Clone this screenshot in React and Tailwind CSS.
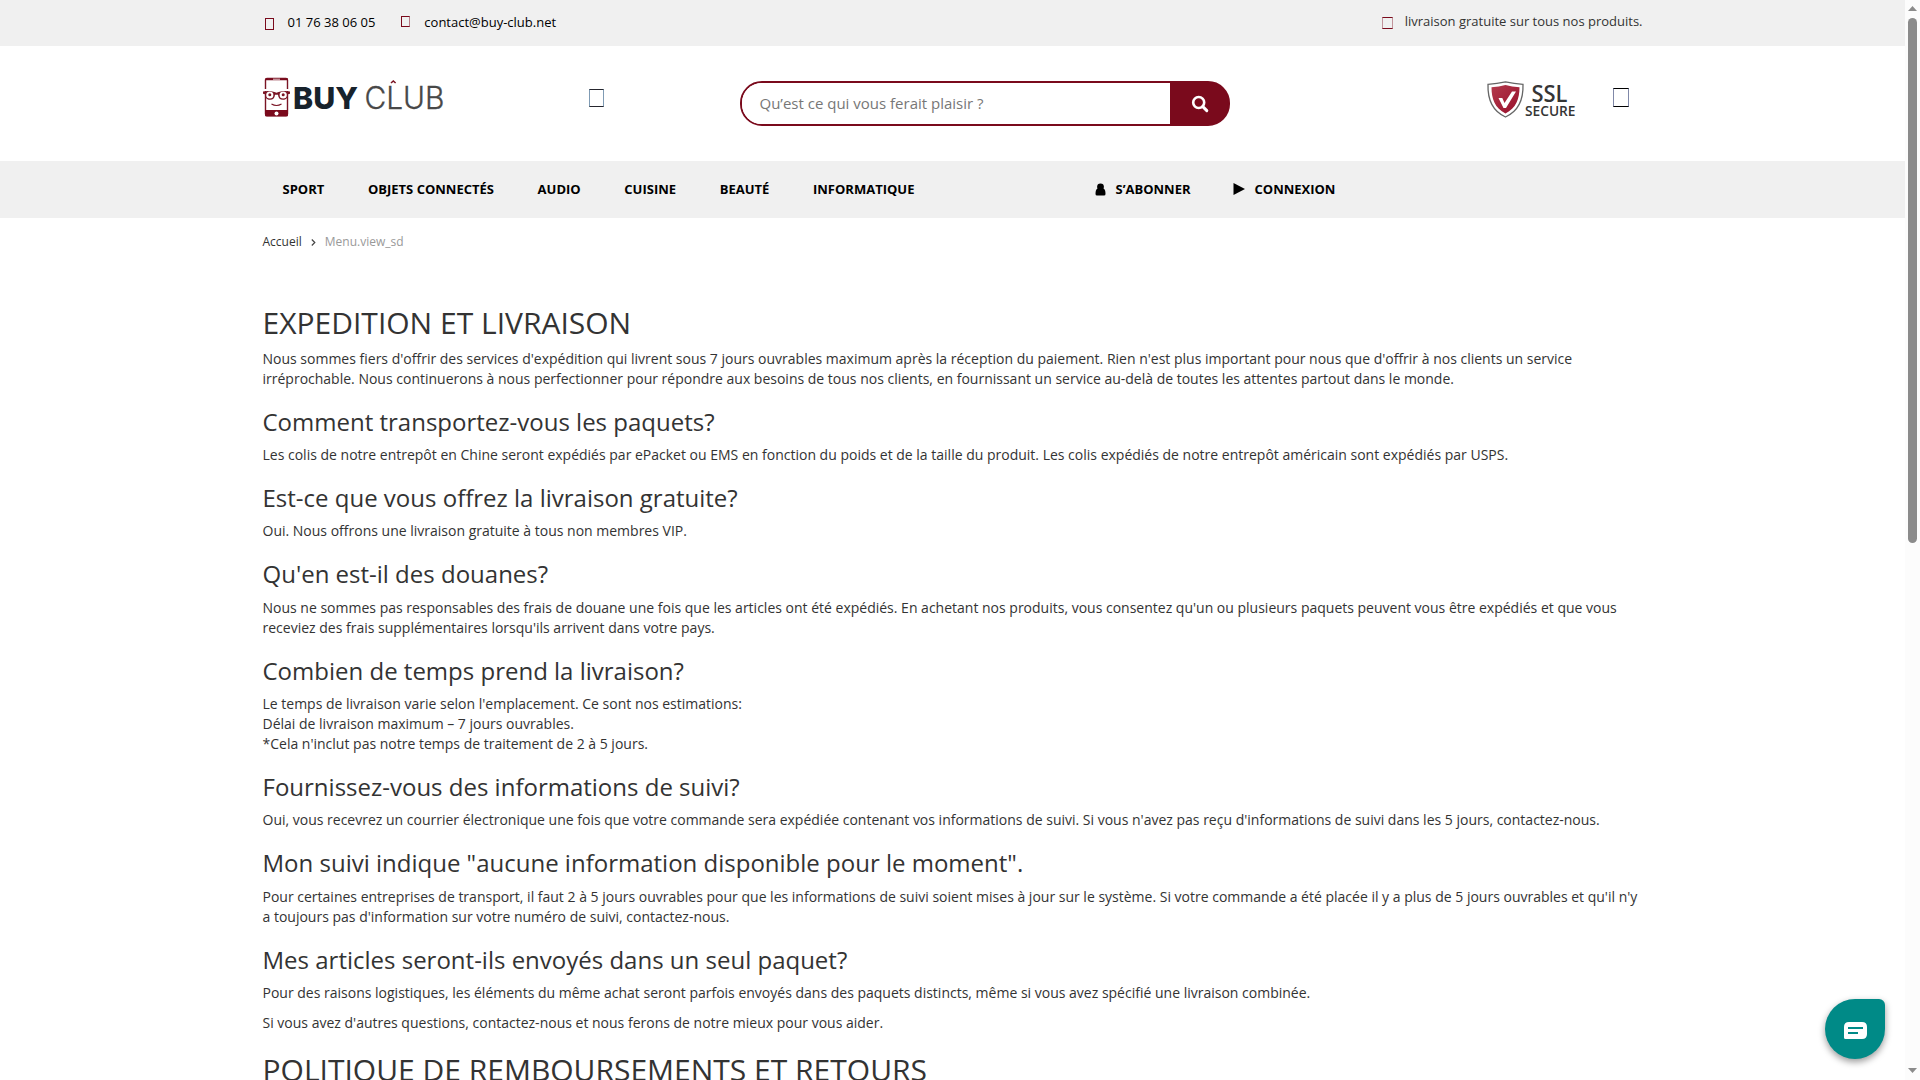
const sections = [
  {
    title: "Comment transportez-vous les paquets?",
    paragraphs: [["Les colis de notre entrepôt en Chine seront expédiés par ePacket ou EMS en fonction du poids et de la taille du produit. Les colis expédiés de notre entrepôt américain sont expédiés par USPS."]],
  },
  {
    title: "Est-ce que vous offrez la livraison gratuite?",
    paragraphs: [["Oui. Nous offrons une livraison gratuite à tous non membres VIP."]],
  },
  {
    title: "Qu'en est-il des douanes?",
    paragraphs: [[
      "Nous ne sommes pas responsables des frais de douane une fois que les articles ont été expédiés. En achetant nos produits, vous consentez qu'un ou plusieurs paquets peuvent vous être expédiés et que vous",
      "receviez des frais supplémentaires lorsqu'ils arrivent dans votre pays.",
    ]],
  },
  {
    title: "Combien de temps prend la livraison?",
    paragraphs: [[
      "Le temps de livraison varie selon l'emplacement. Ce sont nos estimations:",
      "Délai de livraison maximum – 7 jours ouvrables.",
      "*Cela n'inclut pas notre temps de traitement de 2 à 5 jours.",
    ]],
  },
  {
    title: "Fournissez-vous des informations de suivi?",
    paragraphs: [["Oui, vous recevrez un courrier électronique une fois que votre commande sera expédiée contenant vos informations de suivi. Si vous n'avez pas reçu d'informations de suivi dans les 5 jours, contactez-nous."]],
  },
  {
    title: 'Mon suivi indique "aucune information disponible pour le moment".',
    paragraphs: [[
      "Pour certaines entreprises de transport, il faut 2 à 5 jours ouvrables pour que les informations de suivi soient mises à jour sur le système. Si votre commande a été placée il y a plus de 5 jours ouvrables et qu'il n'y",
      "a toujours pas d'information sur votre numéro de suivi, contactez-nous.",
    ]],
  },
  {
    title: "Mes articles seront-ils envoyés dans un seul paquet?",
    paragraphs: [
      ["Pour des raisons logistiques, les éléments du même achat seront parfois envoyés dans des paquets distincts, même si vous avez spécifié une livraison combinée."],
      ["Si vous avez d'autres questions, contactez-nous et nous ferons de notre mieux pour vous aider."],
    ],
  },
];

const categories = ["SPORT", "OBJETS CONNECTÉS", "AUDIO", "CUISINE", "BEAUTÉ", "INFORMATIQUE"];

function Paragraph({ lines }) {
  return (
    <p className="mb-[10px] whitespace-nowrap">
      {lines.map((line) => (
        <span key={line} className="block">{line}</span>
      ))}
    </p>
  );
}

function TopBar() {
  return (
    <div className="h-[46px] bg-[#f0f0f0]">
      <div className="mx-auto flex w-[1380px] text-[13px] leading-[18px] text-black">
        <span className="mt-[18px] ml-[2px] h-[12px] w-[9px] border border-[#7a0a1c]" />
        <span className="mt-[13px] ml-[14px]">01 76 38 06 05</span>
        <span className="mt-[16px] ml-[26px] h-[11px] w-[9px] border border-[#7a0a1c] border-r-[#7a0a1c]/50" />
        <span className="mt-[13px] ml-[14px]">contact@buy-club.net</span>
        <span className="mt-[17px] ml-auto h-[12px] w-[11px] border border-[#7a0a1c] border-x-[#7a0a1c]/40" />
        <span className="mt-[12px] ml-[12px] text-[#333]">livraison gratuite sur tous nos produits.</span>
      </div>
    </div>
  );
}

function Logo() {
  return (
    <svg className="mt-[31px] h-[42px] w-[184px] overflow-visible" viewBox="0.5 0 184 42">
      <rect x="3" y="1.5" width="22" height="37" rx="1.5" fill="#fff" stroke="#7a1424" strokeWidth="1.4" />
      <path d="M2.5 1.500h23v1.800h-23z M2.500 33h23v5a1.500 1.500 0 0 1-1.500 1.500H4A1.500 1.500 0 0 1 2.500 38z" fill="#7a0a1c" />
      <path d="M10.500 2.200h7" stroke="#fff" strokeWidth=".8" />
      <path d="M0 13h28" stroke="#fff" strokeWidth="2" />
      <path d="M.5 14.500c4-.8 9-.8 13.500 1.200 4.500-2 9.500-2 13.500-1.200v2.200l-2 .5c-.2 4-2 5.500-5 5.500-3.200 0-4.800-2-5-5h-3c-.2 3-1.800 5-5 5-3 0-4.800-1.500-5-5.500l-2-.5z" fill="#7a1424" />
      <circle cx="7.300" cy="18" r="3.600" fill="#fff" />
      <circle cx="20.700" cy="18" r="3.600" fill="#fff" />
      <circle cx="7.300" cy="17.800" r="1.500" fill="#7a1424" />
      <circle cx="20.700" cy="17.800" r="1.500" fill="#7a1424" />
      <path d="M9 27q5 3 10 0" fill="none" stroke="#7a1424" strokeWidth="1.100" />
      <circle cx="14" cy="36.500" r="2" fill="#fff" />
      <text x="30.500" y="32" fontFamily="Inter, sans-serif" fontWeight="800" fontSize="30.500" fill="#17222c" textLength="65" lengthAdjust="spacingAndGlyphs">BUY</text>
      <text x="102" y="32" fontFamily="Inter, sans-serif" fontWeight="300" fontSize="30.500" fill="#484848" stroke="#484848" strokeWidth=".3" textLength="80" lengthAdjust="spacingAndGlyphs">CLUB</text>
      <path d="M128.500 6l2.300-2 2.300 2" fill="none" stroke="#7a1424" strokeWidth="1.600" />
    </svg>
  );
}

function SslBadge() {
  return (
    <svg className="mt-[35px] h-[37px] w-[90px] overflow-visible" viewBox="0 0 90 37">
      <defs>
        <linearGradient id="shield" x1="0" y1="0" x2="1" y2="1">
          <stop offset="0" stopColor="#b33a4c" />
          <stop offset="1" stopColor="#970f2b" />
        </linearGradient>
      </defs>
      <path d="M1 3.300Q10 2.500 18.500.8 27 2.500 36 3.300C36.500 19 32 30 18.500 36 5 30 .5 19 1 3.300z" fill="#fff" stroke="#666" strokeWidth="1.300" />
      <path d="M4.500 6.200Q12 5.700 18.500 4 25 5.700 32.500 6.200C32.500 18 29 27 18.500 32.500 8 27 4.500 18 4.500 6.200z" fill="url(#shield)" />
      <path d="M11.500 17h3.800l2.200 5L25 10.500h4L19 27h-2.500z" fill="#fff" />
      <text x="44.500" y="20.500" fontFamily="Open Sans, sans-serif" fontWeight="600" fontSize="23.500" fill="#353535" textLength="36" lengthAdjust="spacingAndGlyphs">SSL</text>
      <text x="38" y="34.700" fontFamily="Open Sans, sans-serif" fontWeight="600" fontSize="14.500" fill="#353535" textLength="50.500" lengthAdjust="spacingAndGlyphs">SECURE</text>
    </svg>
  );
}

function SearchBox() {
  return (
    <div className="mt-[35px] flex h-[45px] w-[490px] overflow-hidden rounded-[22px] border-2 border-[#7a0a1c] bg-[linear-gradient(to_right,#fff_50%,#7a0a1c_50%)]">
      <span className="flex-1 bg-white pl-[18px] text-[15px] leading-[41px] text-[#777]">Qu’est ce qui vous ferait plaisir ?</span>
      <button className="flex w-[58px] items-center justify-center bg-[#7a0a1c] pl-[2px]">
        <svg className="h-[18px] w-[18px]" viewBox="0 0 18 18">
          <circle cx="7.700" cy="7.500" r="5.500" fill="none" stroke="#fff" strokeWidth="2.600" />
          <path d="M11.800 11.600l4 4" stroke="#fff" strokeWidth="3" strokeLinecap="round" />
        </svg>
      </button>
    </div>
  );
}

function Header() {
  return (
    <header className="mx-auto flex h-[115px] w-[1380px]">
      <Logo />
      <span className="mt-[43px] ml-[142px] h-[18px] w-[15px] border border-[#26262e] border-x-[#7f9bb4]" />
      <div className="ml-[136px]"><SearchBox /></div>
      <div className="ml-[257px]"><SslBadge /></div>
      <span className="mt-[42px] ml-[36px] h-[19px] w-[16px] border border-black border-x-[#8088a8]" />
    </header>
  );
}

function Nav() {
  return (
    <nav className="h-[57px] bg-[#f0f0f0]">
      <div className="mx-auto flex h-[55px] w-[1380px] items-center pl-[20px] text-[13px] leading-[20px] font-bold whitespace-nowrap text-black">
        <div className="flex w-[812px] gap-[43.650px]">
          {categories.map((c) => <a key={c}>{c}</a>)}
        </div>
        <a className="flex w-[138px] items-center">
          <svg className="mt-px mr-[10px] h-[13px] w-[11px]" viewBox="0 0 11 13">
            <circle cx="5.500" cy="3.800" r="3.400" />
            <path d="M2.500 5.500h6c1.500 1 2 2.500 2 5.500q0 1.500-1.500 1.500H2Q.5 12.500.5 11c0-3 .5-4.500 2-5.500z" />
          </svg>
          S’ABONNER
        </a>
        <a className="flex items-center">
          <svg className="mt-px mr-[10px] h-[12px] w-[12px]" viewBox="0 0 12 12"><path d="M.5 0L12 6 .5 12z" /></svg>
          CONNEXION
        </a>
      </div>
    </nav>
  );
}

function Scrollbar() {
  return (
    <div className="flex h-full w-[15px] flex-col items-center bg-[#fcfcfc]">
      <svg className="mt-[6px] h-[5px] w-[9px]" viewBox="0 0 9 5"><path d="M4.500 0L9 5H0z" fill="#8b8b8b" /></svg>
      <div className="mt-[7px] h-[525px] w-[9px] rounded-full bg-[#8b8b8b]" />
      <svg className="mt-auto mb-[7px] h-[5px] w-[9px]" viewBox="0 0 9 5"><path d="M0 0h9L4.500 5z" fill="#8b8b8b" /></svg>
    </div>
  );
}

export default function App() {
  return (
    <div className="flex h-[1080px] w-[1920px] overflow-hidden bg-white font-['Open_Sans',sans-serif] text-[14px] leading-[20px] text-[#333]">
      <div className="h-full w-[1905px] overflow-hidden">
        <TopBar />
        <Header />
        <Nav />
        <main className="mx-auto w-[1380px]">
          <div className="flex h-[87.530px] items-start pt-[14px] text-[12px] leading-[20px]">
            <span>Accueil</span>
            <svg className="mt-[7px] mr-[9px] ml-[9px] h-[7px] w-[5px]" viewBox="0 0 5 7"><path d="M.8.5l3 3-3 3" fill="none" stroke="#444" strokeWidth="1.200" /></svg>
            <span className="text-[#999]">Menu.view_sd</span>
          </div>
          <h1 className="mb-[10px] text-[30px] leading-[33px]">EXPEDITION ET LIVRAISON</h1>
          <Paragraph lines={[
            "Nous sommes fiers d'offrir des services d'expédition qui livrent sous 7 jours ouvrables maximum après la réception du paiement. Rien n'est plus important pour nous que d'offrir à nos clients un service",
            "irréprochable. Nous continuerons à nous perfectionner pour répondre aux besoins de tous nos clients, en fournissant un service au-delà de toutes les attentes partout dans le monde.",
          ]} />
          {sections.map((s) => (
            <section key={s.title}>
              <h2 className="mt-[20px] mb-[10px] text-[24px] leading-[26.380px]">{s.title}</h2>
              {s.paragraphs.map((lines) => <Paragraph key={lines[0]} lines={lines} />)}
            </section>
          ))}
          <h1 className="mt-[20px] text-[30px] leading-[33px]">POLITIQUE DE REMBOURSEMENTS ET RETOURS</h1>
        </main>
      </div>
      <Scrollbar />
      <button className="fixed right-[35px] bottom-[21px] flex h-[60px] w-[60px] items-center justify-center rounded-[30px] rounded-tr-[6px] bg-[#008a87] shadow-[0_3px_7px_rgba(0,0,0,0.4)]">
        <svg className="mt-[2px] h-[17px] w-[23px]" viewBox="0 0 23 17">
          <path d="M5 0h13q5 0 5 5v7q0 5-5 5H1.500Q0 17 0 15.500V5q0-5 5-5z" fill="#fff" />
          <path d="M4 6h15M4 11h10" stroke="#008a87" strokeWidth="2" />
        </svg>
      </button>
    </div>
  );
}
